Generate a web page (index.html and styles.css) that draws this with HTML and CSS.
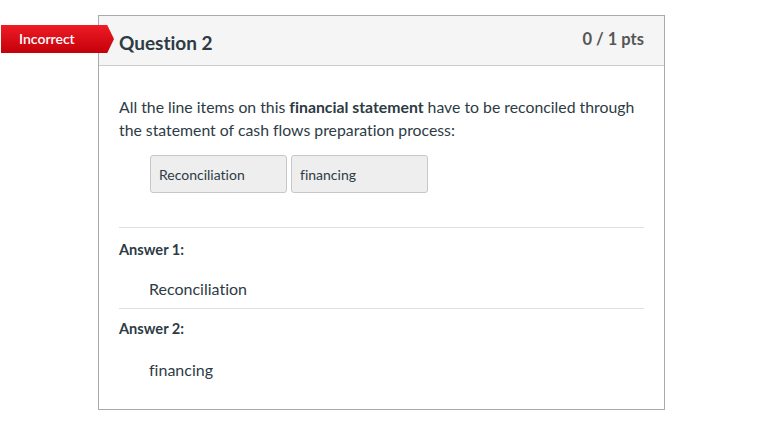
FILE: index.html
```html
<!DOCTYPE html>
<html>
<head>
<meta charset="utf-8">
<link rel="stylesheet" href="styles.css">
</head>
<body>
<div class="page">
  <div class="card">
    <div class="badge">Incorrect</div>
    <div class="card-header">
      <h2 class="title">Question 2</h2>
      <div class="pts">0 / 1 pts</div>
    </div>
    <div class="card-body">
      <p class="question">All the line items on this <strong>financial statement</strong> have to be reconciled through the statement of cash flows preparation process:</p>
      <div class="choices">
        <div class="choice">Reconciliation</div>
        <div class="choice">financing</div>
      </div>
      <div class="answer">
        <div class="answer-label">Answer 1:</div>
        <div class="answer-value">Reconciliation</div>
      </div>
      <div class="answer">
        <div class="answer-label">Answer 2:</div>
        <div class="answer-value">financing</div>
      </div>
    </div>
  </div>
</div>
</body>
</html>
```
FILE: styles.css
```css
* { box-sizing: border-box; }
html, body { margin: 0; padding: 0; background: #fff; }
body { font-family: Lato, "Open Sans", sans-serif; color: #2d3b45; font-variant-ligatures: none; }
.page { padding: 15px 0 0 98px; }
.card {
  position: relative;
  width: 567px;
  height: 395px;
  border: 1px solid #aaaaaa;
}
.badge {
  position: absolute;
  left: -98px;
  top: 9px;
  width: 113px;
  height: 28px;
  padding-left: 18px;
  line-height: 28px;
  font-size: 14px;
  font-weight: 600;
  color: #fff;
  background: linear-gradient(#ee1c25, #c4000a);
  clip-path: polygon(0 0, 94% 0, 100% 50%, 94% 100%, 0 100%);
}
.card-header {
  height: 50px;
  background: #f5f5f5;
  border-bottom: 1px solid #c7cdd1;
  display: flex;
  justify-content: space-between;
  align-items: center;
  padding: 0 20px 0 20px;
}
.title { margin: 0; font-size: 19px; font-weight: 700; color: #2d3b45; padding-top: 3px; }
.pts { font-size: 16.5px; font-weight: 700; color: #555; padding-bottom: 4px; }
.card-body { padding: 29px 20px 0 20px; }
.question { margin: 0; font-size: 15.8px; line-height: 23px; color: #2d3b45; }
.question strong { font-weight: 700; }
.choices { display: flex; gap: 4px; padding: 14px 0 34px 31px; border-bottom: 1px solid #dde0e3; }
.choice {
  width: 137px;
  height: 38px;
  background: #eeeeee;
  border: 1px solid #c7c7c7;
  border-radius: 3px;
  font-size: 14px;
  padding-left: 8px;
  display: flex;
  align-items: center;
  color: #2d3b45;
}
.answer { padding-top: 12px; }
.answer + .answer { border-top: 1px solid #dde0e3; padding-top: 10px; }
.answer-label { font-size: 14.6px; font-weight: 700; line-height: 20px; }
.answer-value { font-size: 16px; line-height: 20px; padding: 19px 0 9px 30px; }
.answer + .answer .answer-value { padding-top: 21px; }
```
